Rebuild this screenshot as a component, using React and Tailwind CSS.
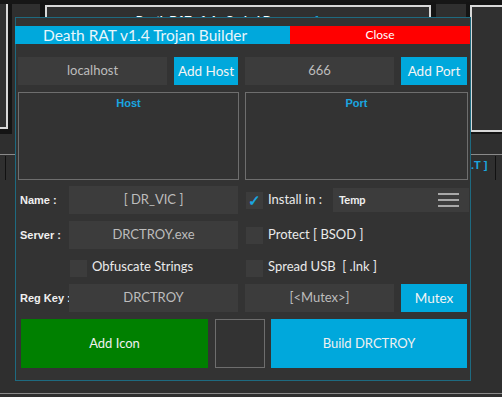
import React from "react";

const font = "font-['Lato','Open_Sans',sans-serif]";
const pix = "font-['Liberation_Sans',Arial,sans-serif]";

const Field = ({ w, children }) => (
    <div className={`${w} shrink-0 h-[28px] bg-[#3c3c3c] flex items-center justify-center text-[13px] text-[#bdbdbd]`}>
        {children}
    </div>
);

const Btn = ({ w, children }) => (
    <div className={`${w} shrink-0 h-[28px] bg-[#00a8dc] flex items-center justify-center text-[13.5px] text-[#f4f4f4]`}>
        {children}
    </div>
);

const Check = ({ on }) => (
    <div className="w-[17px] h-[17px] shrink-0 bg-[#3c3c3c] flex items-center justify-center">
        {on && <span className="text-[#1aa6e0] text-[15px] leading-none font-bold">✓</span>}
    </div>
);

const Label = ({ children }) => (
    <div className={`w-[53px] shrink-0 pl-[4px] whitespace-nowrap text-[11px] font-bold text-[#f0f0f0] ${pix}`}>{children}</div>
);

const Backdrop = () => (
    <>
        {/* desktop windows behind the dialog */}
        <div className="absolute left-0 top-0 w-full h-[4px] bg-[#161616]" />
        <div className="absolute left-0 top-[4px] w-[12px] h-[130px] bg-[#141414]" />
        <div className="absolute left-0 top-[4px] w-[8px] h-[125px] bg-[#303030] border-r-2 border-b-2 border-[#d8d8d8]" />
        <div className="absolute left-[40px] top-[2px] w-[396px] h-[30px] bg-[#141414]" />
        <div className="absolute left-[45px] top-[5px] w-[386px] h-[30px] bg-[#303030] border-2 border-b-0 border-[#d8d8d8]">
            <div className={`pl-[89px] pt-[5px] text-[11px] font-bold text-white whitespace-nowrap ${pix}`}>
                Death RAT v1.4 - Coded By : <span className="text-[#1aa6e0] ml-[8px]">ᴜɢ ɗσκ ғ</span>
            </div>
        </div>
        <div className="absolute left-[466px] top-[2px] w-[36px] h-[132px] bg-[#141414]" />
        <div className="absolute left-[470px] top-[5px] w-[32px] h-[127px] bg-[#303030] border-l-2 border-t-2 border-b-2 border-[#d8d8d8]" />
        <div className="absolute left-0 top-[154px] w-full h-px bg-[#8a8a8a]" />
        <div className="absolute left-[5px] top-[156px] w-px h-[24px] bg-[#111]" />
        <div className="absolute left-[495px] top-[156px] w-px h-[24px] bg-[#111]" />
        <div className={`absolute left-[471px] top-[157px] text-[11px] font-bold text-[#1aa6e0] ${pix}`}>.T ]</div>
        <div className="absolute left-0 top-[393px] w-full h-px bg-[#8a8a8a]" />
    </>
);

export default function App() {
    return (
        <div className={`relative w-[502px] h-[397px] bg-[#2f2f2f] overflow-hidden ${font}`}>
            <Backdrop />

            <div className="absolute left-[15px] top-[17px] w-[456px] h-[364px] bg-[#333333] border border-[#1e6a80] flex flex-col">
                {/* title bar */}
                <div className="mt-[8px] -ml-px flex h-[18px]">
                    <div className="w-[275px] bg-[#00a8dc] text-[15.5px] leading-[18px] text-[#e8f6fb] pl-[28px] whitespace-nowrap">
                        Death RAT v1.4 Trojan Builder
                    </div>
                    <div className="flex-1 bg-[#ff0000] text-[12px] leading-[18px] text-white text-center">Close</div>
                </div>

                {/* host / port inputs */}
                <div className="mt-[13px] ml-[2px] flex gap-[7px]">
                    <Field w="w-[149px]">localhost</Field>
                    <Btn w="w-[64px]">Add Host</Btn>
                    <Field w="w-[149px]">666</Field>
                    <Btn w="w-[66px]">Add Port</Btn>
                </div>

                {/* lists */}
                <div className="mt-[7px] ml-[2px] flex gap-[6px]">
                    <div className="w-[221px] h-[88px] border border-[#6e6e6e]">
                        <div className={`text-center text-[11px] font-bold text-[#1aa6e0] mt-[2px] ${pix}`}>Host</div>
                    </div>
                    <div className="w-[223px] h-[88px] border border-[#6e6e6e]">
                        <div className={`text-center text-[11px] font-bold text-[#1aa6e0] mt-[2px] ${pix}`}>Port</div>
                    </div>
                </div>

                {/* options */}
                <div className="mt-[6px] flex">
                    <div className="w-[229px] shrink-0 flex flex-col">
                        <div className="h-[28px] flex items-center">
                            <Label>Name :</Label>
                            <Field w="w-[169px]">[ DR_VIC ]</Field>
                        </div>
                        <div className="mt-[7px] h-[28px] flex items-center">
                            <Label>Server :</Label>
                            <Field w="w-[169px]">DRCTROY.exe</Field>
                        </div>
                        <div className="mt-[5px] h-[28px] flex items-center pl-[54px] gap-[5px]">
                            <Check />
                            <span className="text-[13px] text-[#eaeaea] -mt-[2px]">Obfuscate Strings</span>
                        </div>
                        <div className="mt-[2px] h-[28px] flex items-center">
                            <Label>Reg Key :</Label>
                            <Field w="w-[169px]">DRCTROY</Field>
                        </div>
                    </div>

                    <div className="flex flex-col">
                        <div className="h-[28px] flex items-center pl-[1px]">
                            <Check on />
                            <span className="ml-[5px] w-[65px] text-[13px] text-[#eaeaea]">Install in :</span>
                            <div className="w-[136px] h-[24px] bg-[#3c3c3c] flex items-center justify-between pl-[6px] pr-[10px]">
                                <span className="text-[11px] font-bold text-[#f0f0f0]">Temp</span>
                                <div className="flex flex-col gap-[4px]">
                                    <div className="w-[21px] h-[2px] bg-[#a8a8a8]" />
                                    <div className="w-[21px] h-[2px] bg-[#a8a8a8]" />
                                    <div className="w-[21px] h-[2px] bg-[#a8a8a8]" />
                                </div>
                            </div>
                        </div>
                        <div className="mt-[7px] h-[28px] flex items-center pl-[1px]">
                            <Check />
                            <span className="ml-[5px] text-[13px] text-[#eaeaea] -mt-[1px]">Protect [ BSOD ]</span>
                        </div>
                        <div className="mt-[5px] h-[28px] flex items-center pl-[1px]">
                            <Check />
                            <span className="ml-[5px] text-[13px] text-[#eaeaea] whitespace-pre -mt-[2px]">Spread USB  [ .lnk ]</span>
                        </div>
                        <div className="mt-[2px] flex gap-[7px]">
                            <Field w="w-[149px]">[&lt;Mutex&gt;]</Field>
                            <Btn w="w-[66px]">Mutex</Btn>
                        </div>
                    </div>
                </div>

                {/* actions */}
                <div className="mt-[7px] ml-[5px] flex h-[49px]">
                    <div className="w-[187px] bg-[#008000] flex items-center justify-center text-[13px] text-[#f0f0f0]">Add Icon</div>
                    <div className="ml-[7px] w-[50px] border border-[#6e6e6e]" />
                    <div className="ml-[6px] w-[196px] bg-[#00a8dc] flex items-center justify-center text-[13px] text-[#f0f0f0]">Build DRCTROY</div>
                </div>
            </div>
        </div>
    );
}
